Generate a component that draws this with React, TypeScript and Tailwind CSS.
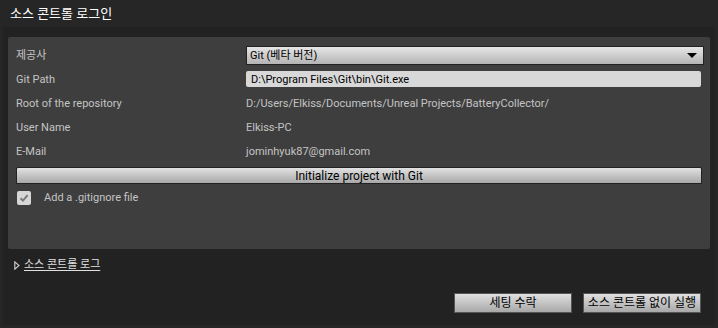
import React from "react";

const font = { fontFamily: "Roboto, 'Noto Sans CJK KR', sans-serif" };

function Row({ label, children }: { label: string; children: React.ReactNode }) {
  return (
    <div className="flex h-6 items-center leading-none">
      <div className="w-[238px] shrink-0 pl-2 text-[11px] text-[#c4c4c4]">{label}</div>
      <div className="flex min-w-0 flex-1 items-center">{children}</div>
    </div>
  );
}

export default function App() {
  return (
    <div className="h-[328px] w-[718px] overflow-hidden bg-[#262626]" style={font}>
      <div className="flex h-[27px] items-center pl-[10px] text-[13px] text-white">소스 콘트롤 로그인</div>
      <div className="mx-[3px] h-[298px] bg-[#222222] pt-[10px]">
        <div className="mx-[5px] h-[212px] rounded-[2px] bg-[#3e3e3e] pr-[6px] pt-[6px]">
          <div>
            <Row label="제공사">
              <div className="flex h-[19px] flex-1 items-center justify-between border border-[#222] bg-gradient-to-b from-[#e6e6e6] to-[#b4b4b4] pl-[3px] pr-[6px] text-[11px] text-black">
                <span>Git (베타 버전)</span>
                <span className="h-0 w-0 border-x-[5px] border-t-[5px] border-x-transparent border-t-black" />
              </div>
            </Row>
            <Row label="Git Path">
              <div className="mr-[3px] flex h-[16px] flex-1 items-center rounded-[2px] bg-[#d8d8d8] pl-[5px] text-[11px] text-black">
                D:\Program Files\Git\bin\Git.exe
              </div>
            </Row>
            <Row label="Root of the repository">
              <span className="text-[11px] text-[#c4c4c4]">D:/Users/Elkiss/Documents/Unreal Projects/BatteryCollector/</span>
            </Row>
            <Row label="User Name">
              <span className="text-[11px] text-[#c4c4c4]">Elkiss-PC</span>
            </Row>
            <Row label="E-Mail">
              <span className="text-[11px] text-[#c4c4c4]">jominhyuk87@gmail.com</span>
            </Row>
          </div>
          <div className="ml-[8px] mr-[2px] mt-[4px] flex h-[17px] items-center justify-center rounded-t-[2px] border border-[#222] bg-gradient-to-b from-[#e2e2e2] to-[#a8a8a8] text-[12px] text-black">
            Initialize project with Git
          </div>
          <div className="ml-[9px] mt-[6px] flex items-center">
            <div className="flex h-[14px] w-[14px] items-center justify-center rounded-[2px] bg-[#d6d6d6]">
              <svg width="10" height="10" viewBox="0 0 10 10">
                <path d="M1.5 5.2 L4 7.6 L8.6 2.2" stroke="#7a7a7a" strokeWidth="2" fill="none" />
              </svg>
            </div>
            <span className="ml-[13px] text-[11px] text-[#c4c4c4]">Add a .gitignore file</span>
          </div>
        </div>
        <div className="ml-[11px] mt-[8px] flex items-center text-[11px] text-[#e0e0e0]">
          <svg width="6" height="9" viewBox="0 0 6 9" className="mr-[4px]">
            <path d="M0.8 0.8 L5 4.5 L0.8 8.2 Z" stroke="#d0d0d0" strokeWidth="1.1" fill="none" />
          </svg>
          <span className="underline underline-offset-2">소스 콘트롤 로그</span>
        </div>
        <div className="mr-[14px] mt-[19px] flex justify-end gap-[11px]">
          <div className="flex h-[20px] w-[118px] items-center justify-center border border-[#555] bg-gradient-to-b from-[#e0e0e0] to-[#a8a8a8] text-[12px] text-black">
            세팅 수락
          </div>
          <div className="flex h-[20px] w-[118px] items-center justify-center border border-[#555] bg-gradient-to-b from-[#e0e0e0] to-[#a8a8a8] text-[12px] text-black">
            소스 콘트롤 없이 실행
          </div>
        </div>
      </div>
    </div>
  );
}
